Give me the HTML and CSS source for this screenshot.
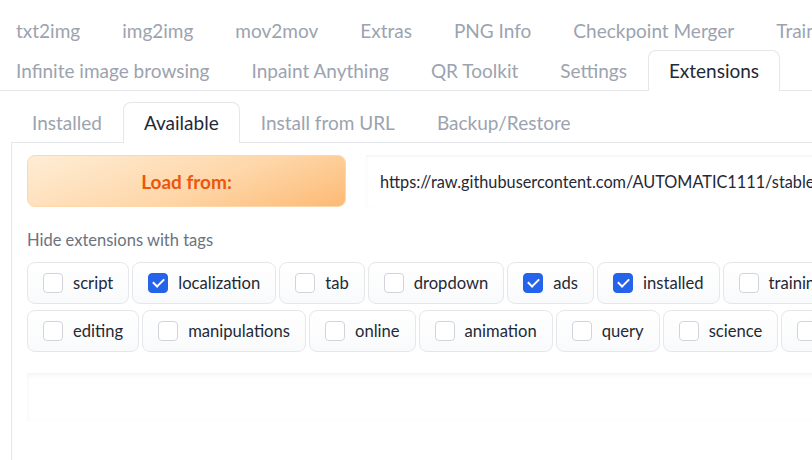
FILE: index.html
```html
<!DOCTYPE html>
<html>
<head>
<meta charset="utf-8">
<link rel="stylesheet" href="styles.css">
</head>
<body>
<div class="app">
  <div class="tabrow first">
    <div class="tab">txt2img</div>
    <div class="tab">img2img</div>
    <div class="tab">mov2mov</div>
    <div class="tab">Extras</div>
    <div class="tab">PNG Info</div>
    <div class="tab">Checkpoint Merger</div>
    <div class="tab">Train</div>
  </div>
  <div class="tabrow second">
    <div class="tab">Infinite image browsing</div>
    <div class="tab">Inpaint Anything</div>
    <div class="tab">QR Toolkit</div>
    <div class="tab">Settings</div>
    <div class="tab selected">Extensions</div>
  </div>

  <div class="subtabs">
    <div class="tab">Installed</div>
    <div class="tab selected">Available</div>
    <div class="tab">Install from URL</div>
    <div class="tab">Backup/Restore</div>
  </div>

  <div class="panel">
    <div class="loadrow">
      <button class="loadbtn">Load from:</button>
      <div class="urlbox">https://raw.githubusercontent.com/AUTOMATIC1111/stable-diffusion-webui-extensions/master/index.json</div>
    </div>
    <div class="label">Hide extensions with tags</div>
    <div class="tags">
      <div class="tagrow">
        <label class="tag"><span class="cb"></span>script</label>
        <label class="tag"><span class="cb on"></span>localization</label>
        <label class="tag"><span class="cb"></span>tab</label>
        <label class="tag"><span class="cb"></span>dropdown</label>
        <label class="tag"><span class="cb on"></span>ads</label>
        <label class="tag"><span class="cb on"></span>installed</label>
        <label class="tag"><span class="cb"></span>training</label>
      </div>
      <div class="tagrow">
        <label class="tag"><span class="cb"></span>editing</label>
        <label class="tag"><span class="cb"></span>manipulations</label>
        <label class="tag"><span class="cb"></span>online</label>
        <label class="tag"><span class="cb"></span>animation</label>
        <label class="tag"><span class="cb"></span>query</label>
        <label class="tag"><span class="cb"></span>science</label>
        <label class="tag"><span class="cb"></span>models</label>
      </div>
    </div>
    <div class="lowerbox"></div>
  </div>
</div>
</body>
</html>
```

FILE: styles.css
```css
html, body {
  margin: 0;
  padding: 0;
  background: #ffffff;
  overflow: hidden;
}
body {
  font-family: "Lato", "Liberation Sans", sans-serif;
  color: #1f2937;
  width: 812px;
  height: 460px;
}
.app {
  width: 1400px;
  height: 460px;
  overflow: hidden;
}
.tabrow {
  display: flex;
  flex-wrap: nowrap;
  height: 40px;
}
.tabrow.first {
  margin-top: 10px;
}
.tabrow.second {
  border-bottom: 1px solid #e5e7eb;
}
.tabrow .tab:first-child {
  margin-left: -5px;
}
.tab {
  box-sizing: border-box;
  height: 40px;
  padding: 0 20px 1px 20px;
  border: 1px solid transparent;
  border-bottom: none;
  display: flex;
  align-items: center;
  font-size: 19px;
  color: #9ca3af;
  white-space: nowrap;
  flex-shrink: 0;
}
.tab.selected {
  background: #ffffff;
  border-color: #e5e7eb;
  border-radius: 8px 8px 0 0;
  color: #1f2937;
  height: 41px;
  margin-bottom: -1px;
}
.subtabs {
  display: flex;
  margin-top: 11px;
  margin-left: 11px;
  height: 40px;
  border-bottom: 1px solid #e5e7eb;
}
.panel {
  margin-left: 11px;
  border-left: 1px solid #e5e7eb;
  padding: 12px 15px 0 15px;
  height: 305px;
}
.loadrow {
  display: flex;
  gap: 20px;
  height: 52px;
}
.loadbtn {
  box-sizing: border-box;
  width: 319px;
  height: 52px;
  flex-shrink: 0;
  border: 1px solid #fed7aa;
  border-radius: 8px;
  background: linear-gradient(160deg, #ffedd5 0%, #fed7aa 55%, #fdba74 100%);
  color: #ea580c;
  font-family: "Lato", "Liberation Sans", sans-serif;
  font-weight: 700;
  font-size: 19px;
  padding: 0;
}
.urlbox {
  flex: 1;
  box-sizing: border-box;
  height: 52px;
  background: #ffffff;
  box-shadow: inset 0 1px 3px rgba(0, 0, 0, 0.06);
  padding: 0 14px;
  display: flex;
  align-items: center;
  font-size: 16.3px;
  color: #1f2937;
  white-space: nowrap;
  overflow: hidden;
}
.label {
  margin-top: 22px;
  line-height: 22px;
  font-size: 16.5px;
  color: #6b7280;
}
.tags {
  margin-top: 11px;
  display: flex;
  flex-direction: column;
  gap: 6px;
}
.tagrow {
  display: flex;
  gap: 3px;
}
.tag {
  box-sizing: border-box;
  height: 42px;
  display: flex;
  align-items: center;
  padding: 0 15px 0 15px;
  border: 1px solid #e5e7eb;
  border-radius: 8px;
  background: linear-gradient(180deg, #ffffff 0%, #f9fafb 100%);
  font-size: 16.6px;
  color: #1f2937;
  white-space: nowrap;
  flex-shrink: 0;
}
.cb {
  box-sizing: border-box;
  width: 20px;
  height: 20px;
  border: 1px solid #d1d5db;
  border-radius: 4px;
  background: #ffffff;
  margin-right: 10px;
  position: relative;
}
.cb.on {
  background: #2563eb;
  border-color: #2563eb;
}
.cb.on::after {
  content: "";
  position: absolute;
  left: 6px;
  top: 2px;
  width: 5px;
  height: 9px;
  border: solid #ffffff;
  border-width: 0 2.5px 2.5px 0;
  transform: rotate(45deg);
}
.lowerbox {
  margin-top: 21px;
  height: 48px;
  background: #ffffff;
  box-shadow: inset 0 2px 5px rgba(0, 0, 0, 0.05);
}
```
